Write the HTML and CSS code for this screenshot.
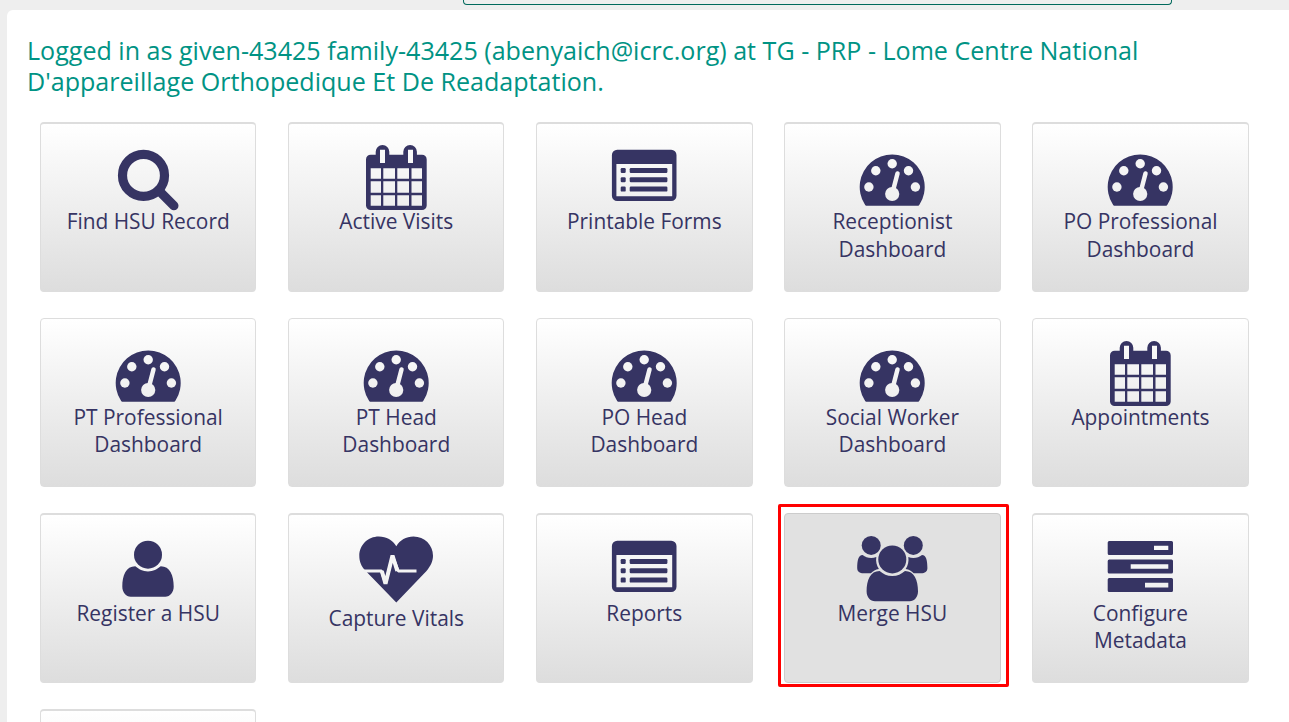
FILE: index.html
```
<!DOCTYPE html>
<html lang="en">
<head>
<meta charset="utf-8">
<title>Home</title>
<link rel="stylesheet" href="styles.css">
</head>
<body>
<svg class="sprite" width="0" height="0" aria-hidden="true">
  <symbol id="search" viewBox="0 0 80 64" overflow="visible">
    <g fill="none" stroke="currentColor" stroke-width="9.2" stroke-linecap="round"><circle cx="35.5" cy="31.4" r="21"/><path d="M50.5 46.3 65.9 61.7"/></g>
  </symbol>
  <symbol id="calendar" viewBox="0 0 80 64" overflow="visible">
    <path fill-rule="evenodd" d="M14.7 10.7H19.7V7.8a6.8 6.8 0 0 1 13.6 0V10.7H47.3V7.8a6.8 6.8 0 0 1 13.6 0V10.7H66a4.7 4.7 0 0 1 4.7 4.7V61.4a4.7 4.7 0 0 1-4.7 4.7H14.7A4.7 4.7 0 0 1 10 61.4V15.4a4.7 4.7 0 0 1 4.7-4.7ZM24 5.7V19h5V5.7ZM52 5.7V19h5V5.7ZM14.7 24.3V34.7H25V24.3ZM27.3 24.3V34.7H39V24.3ZM41.3 24.3V34.7H53V24.3ZM55.5 24.3V34.7H66V24.3ZM14.7 37.2V48.7H25V37.2ZM27.3 37.2V48.7H39V37.2ZM41.3 37.2V48.7H53V37.2ZM55.5 37.2V48.7H66V37.2ZM14.7 51.2V61.7H25V51.2ZM27.3 51.2V61.7H39V51.2ZM41.3 51.2V61.7H53V51.2ZM55.5 51.2V61.7H66V51.2Z"/>
  </symbol>
  <symbol id="form" viewBox="-0.2 0 80 64" overflow="visible">
    <path fill-rule="evenodd" d="M13 5.7H67a5.3 5.3 0 0 1 5.3 5.3V51.7a5.3 5.3 0 0 1-5.3 5.3H13a5.3 5.3 0 0 1-5.3-5.3V11A5.3 5.3 0 0 1 13 5.7ZM12.2 20V52.3H68V20Z"/>
    <g><rect x="16.5" y="24" width="5" height="5" rx="1.2"/><rect x="16.5" y="33.3" width="5" height="5" rx="1.2"/><rect x="16.5" y="42.6" width="5" height="5" rx="1.2"/><rect x="25.5" y="24" width="37.7" height="5" rx="1.2"/><rect x="25.5" y="33.3" width="37.7" height="5" rx="1.2"/><rect x="25.5" y="42.6" width="37.7" height="5" rx="1.2"/></g>
  </symbol>
  <symbol id="gauge" viewBox="-0.2 0 80 64" overflow="visible">
    <mask id="gauge-cut" maskUnits="userSpaceOnUse" x="0" y="0" width="80" height="70">
      <rect width="80" height="70" fill="#fff"/>
      <g fill="#000"><circle cx="16.7" cy="43" r="4.7"/><circle cx="23.6" cy="26.7" r="4.7"/><circle cx="40" cy="19.7" r="4.7"/><circle cx="56.3" cy="26.7" r="4.7"/><circle cx="63.2" cy="43" r="4.7"/><circle cx="40" cy="50" r="7.1"/></g>
      <path d="M41 46 45.3 29.5" stroke="#000" stroke-width="4.5" stroke-linecap="round"/>
    </mask>
    <path mask="url(#gauge-cut)" d="M14 61.7a1.5 1.5 0 0 1-1-.6L12.4 60.1A32.5 32.5 0 1 1 67.6 60.1L67 61.1a1.5 1.5 0 0 1-1 .6Z"/>
  </symbol>
  <symbol id="user" viewBox="0 0 80 64" overflow="visible">
    <circle cx="40" cy="19.7" r="14"/>
    <path d="M27.3 31.3C31 34.2 34.7 36.5 40 36.5S49 34.2 52.7 31.3C62 31.3 65.7 40.5 65.7 51.5 65.7 57.5 62 61.7 57.3 61.7H22.7C18 61.7 14.3 57.5 14.3 51.5 14.3 40.5 18 31.3 27.3 31.3Z"/>
  </symbol>
  <symbol id="heartbeat" viewBox="0 0 80 69" overflow="visible">
    <mask id="pulse-cut" maskUnits="userSpaceOnUse" x="0" y="0" width="80" height="70">
      <rect width="80" height="70" fill="#fff"/>
      <path d="M6 36H25.5L29.5 48.5 36.5 21 42.3 36H60.5" fill="none" stroke="#000" stroke-width="2.8" stroke-linejoin="bevel"/>
      <path d="M25.8 36 29.5 48.8 36.5 20.5 41.3 36" fill="none" stroke="#000" stroke-width="4" stroke-linejoin="bevel"/>
    </mask>
    <path mask="url(#pulse-cut)" d="M40.3 67.4 9.5 35.7C5 31 3.3 26.5 3.3 20.8 3.3 10 12 1.5 22.8 1.5 30.5 1.5 36.5 5 40.3 11.3 44 5 50 1.5 57.5 1.5 68.5 1.5 77 10 77 20.8 77 26.5 74.5 31.2 70.5 36Z"/>
  </symbol>
  <symbol id="group" viewBox="-0.3 0 80 64" overflow="visible">
    <circle cx="18.9" cy="10.4" r="9.5"/><circle cx="61" cy="10.4" r="9.5"/><circle cx="40" cy="24.4" r="14"/>
    <path d="M10.3 19.9C12.8 21.7 15.5 22.9 18.9 22.9 20.7 22.9 22.5 22.6 24 22 23.3 26.5 24.3 30.5 26.6 33.9 23.2 34.3 20.8 35.8 18.6 38.3H11.2C7.5 38.3 4.9 36.8 4.9 33 4.9 25.5 6 19.9 10.3 19.9Z"/>
    <path d="M69.7 19.9C67.2 21.7 64.5 22.9 61.1 22.9 59.3 22.9 57.5 22.6 56 22 56.7 26.5 55.7 30.5 53.4 33.9 56.8 34.3 59.2 35.8 61.4 38.3H68.8C72.5 38.3 75.1 36.8 75.1 33 75.1 25.5 74 19.9 69.7 19.9Z"/>
    <path d="M27.3 36C31 38.9 34.7 41.1 40 41.1S49 38.9 52.7 36C62 36 65.7 45.2 65.7 56.2 65.7 62.2 62 66.2 57.3 66.2H22.7C18 66.2 14.3 62.2 14.3 56.2 14.3 45.2 18 36 27.3 36Z"/>
  </symbol>
  <symbol id="tasks" viewBox="0 0 80 64" overflow="visible">
    <path fill-rule="evenodd" d="M9.2 6H71.5A1.5 1.5 0 0 1 73 7.5V18.5A1.5 1.5 0 0 1 71.5 20H9.2A1.5 1.5 0 0 1 7.7 18.5V7.5A1.5 1.5 0 0 1 9.2 6ZM54 10.7V15H68.3V10.7ZM9.2 24.5H71.5A1.5 1.5 0 0 1 73 26V37A1.5 1.5 0 0 1 71.5 38.5H9.2A1.5 1.5 0 0 1 7.7 37V26A1.5 1.5 0 0 1 9.2 24.5ZM30.7 29.2V33.8H68.3V29.2ZM9.2 43H71.5A1.5 1.5 0 0 1 73 44.5V55.5A1.5 1.5 0 0 1 71.5 57H9.2A1.5 1.5 0 0 1 7.7 55.5V44.5A1.5 1.5 0 0 1 9.2 43ZM45 47.8V52.5H68.3V47.8Z"/>
  </symbol>
</svg>
<header class="topbar"><div class="notice"></div></header>
<main class="panel">
  <h1 class="greeting">Logged in as given-43425 family-43425 (abenyaich@icrc.org) at TG - PRP - Lome Centre National D'appareillage Orthopedique Et De Readaptation.</h1>
  <nav class="apps">
    <a class="app"><svg class="icon"><use href="#search"/></svg><span class="label">Find HSU Record</span></a>
    <a class="app"><svg class="icon"><use href="#calendar"/></svg><span class="label">Active Visits</span></a>
    <a class="app"><svg class="icon"><use href="#form"/></svg><span class="label">Printable Forms</span></a>
    <a class="app"><svg class="icon"><use href="#gauge"/></svg><span class="label">Receptionist Dashboard</span></a>
    <a class="app"><svg class="icon"><use href="#gauge"/></svg><span class="label">PO Professional Dashboard</span></a>
    <a class="app app-thin"><svg class="icon"><use href="#gauge"/></svg><span class="label">PT Professional Dashboard</span></a>
    <a class="app app-thin"><svg class="icon"><use href="#gauge"/></svg><span class="label">PT Head<br>Dashboard</span></a>
    <a class="app app-thin"><svg class="icon"><use href="#gauge"/></svg><span class="label">PO Head<br>Dashboard</span></a>
    <a class="app app-thin"><svg class="icon"><use href="#gauge"/></svg><span class="label">Social Worker Dashboard</span></a>
    <a class="app app-thin"><svg class="icon"><use href="#calendar"/></svg><span class="label">Appointments</span></a>
    <a class="app"><svg class="icon"><use href="#user"/></svg><span class="label">Register a HSU</span></a>
    <a class="app"><svg class="icon icon-tall"><use href="#heartbeat"/></svg><span class="label">Capture Vitals</span></a>
    <a class="app"><svg class="icon"><use href="#form"/></svg><span class="label">Reports</span></a>
    <a class="app app-active"><svg class="icon"><use href="#group"/></svg><span class="label">Merge HSU</span></a>
    <a class="app"><svg class="icon"><use href="#tasks"/></svg><span class="label">Configure Metadata</span></a>
    <a class="app"></a>
  </nav>
</main>
</body>
</html>
```
FILE: styles.css
```
* { box-sizing: border-box; }
html, body { height: 100%; }
body {
  margin: 0;
  overflow: hidden;
  display: flex;
  flex-direction: column;
  background: #eee;
  font-family: "Open Sans", "Noto Sans", sans-serif;
}
.sprite { position: absolute; }
.topbar { height: 10px; flex: none; padding-left: 463px; }
.notice {
  width: 709px;
  height: 5px;
  border: 1px solid #00695c;
  border-top: 0;
  border-radius: 0 0 4px 4px;
}
.panel {
  flex: 1;
  min-height: 0;
  overflow: hidden;
  margin-left: 7px;
  padding: 25px 20px 0;
  background: #fff;
  border-radius: 6px 0 0 0;
}
.greeting {
  margin: 0 0 25px;
  font-size: 25.08px;
  line-height: 31px;
  font-weight: 400;
  color: #009384;
}
.apps {
  display: grid;
  grid-template-columns: repeat(5, 216.41px);
  grid-auto-rows: 169.7px;
  gap: 26px 31.67px;
  padding-left: 13px;
}
.app {
  display: flex;
  flex-direction: column;
  align-items: center;
  padding: 20px 18px 0;
  border: 1px solid #ddd;
  border-top-width: 2px;
  border-radius: 4px;
  background: linear-gradient(#fff, #ddd);
  color: #363463;
  text-align: center;
}
.app-thin { border-top-width: 1px; padding-top: 21px; }
.icon {
  width: 80px;
  height: 64px;
  flex: none;
  overflow: visible;
  fill: currentColor;
}
.icon-tall { height: 69px; }
.label { margin-top: 0.37px; font-size: 20.9px; line-height: 27.3px; }
.app-active {
  position: relative;
  border: 1px solid #ccc;
  padding-top: 21px;
  background: #e1e1e1;
}
.app-active::after {
  content: "";
  position: absolute;
  inset: -10px -9px -5px -7px;
  border: 3px solid #f00;
  border-radius: 2px;
}
```
